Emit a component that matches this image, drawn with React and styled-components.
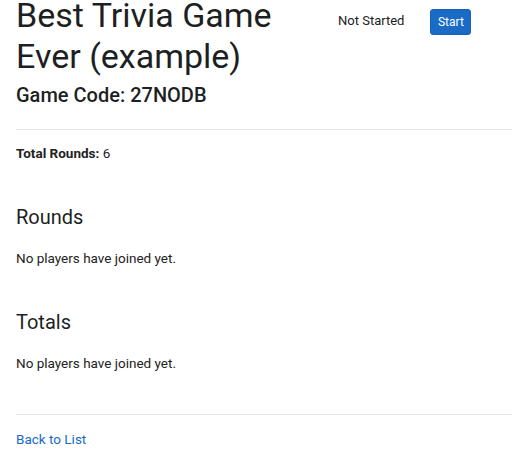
import React from "react";
import styled, { createGlobalStyle } from "styled-components";

const Global = createGlobalStyle`
  html, body { margin: 0; padding: 0; background: #fff; }
  body { font-family: Roboto, "Noto Sans", Arial, sans-serif; color: #212529; }
`;

const Page = styled.div`
  padding: 0 0 0 16px;
  overflow: hidden;
`;

const Header = styled.header`
  display: flex;
  align-items: flex-start;
`;

const TitleBlock = styled.div`
  width: 314px;
  flex: none;
`;

const Title = styled.h1`
  margin: -5px 0 0;
  font-size: 34px;
  line-height: 40.8px;
  font-weight: 400;
  color: #1d1f23;
`;

const Code = styled.h2`
  margin: 4px 0 0;
  font-size: 20px;
  line-height: 28px;
  font-weight: 500;
  color: #1d1f23;
`;

const Status = styled.span`
  margin: 12px 0 0 8px;
  font-size: 13px;
  line-height: 18px;
  color: #222;
`;

const Button = styled.button`
  margin: 9px 0 0 26px;
  width: 41px;
  height: 26px;
  padding: 0;
  border: 1px solid #1762b8;
  border-radius: 3px;
  background: #1a6bc6;
  color: #fff;
  font-family: Roboto, Arial, sans-serif;
  font-size: 12px;
`;

const Rule = styled.hr`
  margin: ${(p) => p.$top}px 0 0;
  border: 0;
  border-top: 1px solid #e6e6e6;
  height: 0;
`;

const Para = styled.p`
  margin: ${(p) => p.$top}px 0 0;
  font-size: 13.5px;
  line-height: 18px;
  color: #222;
`;

const Label = styled.strong`
  font-weight: 700;
  color: #222;
`;

const Section = styled.h3`
  margin: ${(p) => p.$top}px 0 0;
  font-size: 20px;
  line-height: 26px;
  font-weight: 400;
  color: #1d1f23;
`;

const Link = styled.a`
  display: inline-block;
  margin-top: 15px;
  font-size: 13.5px;
  line-height: 18px;
  color: #1a6bc6;
  text-decoration: none;
`;

export default function App() {
  return (
    <>
      <Global />
      <Page>
        <Header>
          <TitleBlock>
            <Title>Best Trivia Game Ever (example)</Title>
            <Code>Game Code: 27NODB</Code>
          </TitleBlock>
          <Status>Not Started</Status>
          <Button>Start</Button>
        </Header>
        <Rule $top={20} />
        <Para $top={14}>
          <Label>Total Rounds:</Label> 6
        </Para>
        <Section $top={42}>Rounds</Section>
        <Para $top={19}>No players have joined yet.</Para>
        <Section $top={42}>Totals</Section>
        <Para $top={19}>No players have joined yet.</Para>
        <Rule $top={42} />
        <Link href="#">Back to List</Link>
      </Page>
    </>
  );
}
